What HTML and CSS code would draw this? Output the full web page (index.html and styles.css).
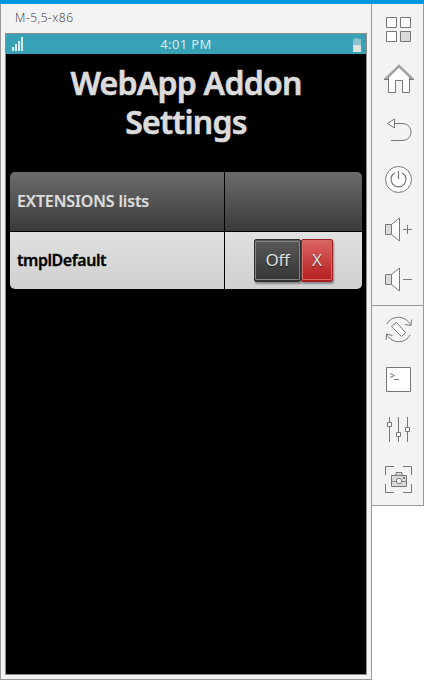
FILE: index.html
```html
<!DOCTYPE html>
<html lang="en">
<head>
<meta charset="utf-8">
<title>M-5,5-x86</title>
<link rel="stylesheet" href="styles.css">
</head>
<body>
<div class="topline"></div>
<div class="window">
  <main class="phone">
    <div class="caption"><span class="device">M-5,5-x86</span></div>
    <div class="screen">
      <div class="status">
        <svg class="signal" width="12" height="14"><path d="M1 10h2v4h-2zM4 7h2v7h-2zM7 4h2v10h-2zM10 0h2v14h-2z" fill="#dcebed"/></svg>
        <span class="clock">4:01 PM</span>
        <svg class="battery" width="8" height="14"><path d="M0 1h2V0h3v1h3v6H0z" fill="#8ac3ce"/><path d="M0 7h8v7H0z" fill="#e1e1e1"/></svg>
      </div>
      <h1>WebApp Addon Settings</h1>
      <div class="table">
        <div class="cell head"><span class="headtext">EXTENSIONS lists</span></div>
        <div class="cell head"></div>
        <div class="cell row"><span class="rowtext">tmplDefault</span></div>
        <div class="cell row actions">
          <button class="btn off"><span>Off</span></button>
          <button class="btn remove"><span>X</span></button>
        </div>
      </div>
    </div>
  </main>
  <aside class="tools">
    <div class="group first">
      <svg viewBox="372 5 51 50"><g fill="#fff"><path d="M386.500 17.500h10v10h-10zM400.500 17.500h10v10h-10zM386.500 31.500h10v10h-10z"/><path d="M400.500 31.500h10v10h-10z" fill="#dadada"/></g></svg>
      <svg viewBox="372 55 51 50"><path d="M388.500 77v15.500h7v-12h7v12h7V77L399 67z" fill="#fff"/><path d="M385 79.500 399 66l14 13.500" stroke="#a2a2a2" stroke-width="2.500"/><path d="M384 79.500h4.500M409.500 79.500h4.500"/></svg>
      <svg viewBox="372 105 51 50"><path d="M394.500 123.500h7.500c12 0 12 17 0 17h-11"/><path d="M394.500 119v9l-7-4.500z" fill="#fff"/></svg>
      <svg viewBox="372 155 51 50"><circle cx="398.500" cy="179.500" r="13" fill="#fff"/><path d="M398.500 171v8M395 172.700a7.500 7.500 0 1 0 7 0" stroke-width="1.200"/></svg>
      <svg viewBox="372 205 51 50"><path d="M391.500 224.500l8-6.500v23l-8-6.500z" fill="#fff"/><path d="M385.500 224.500h6v10h-6z" fill="#dadada"/><path d="M403 229.500h9M407.500 225v9"/></svg>
      <svg viewBox="372 255 51 50"><path d="M391.500 274.500l8-6.500v23l-8-6.500z" fill="#fff"/><path d="M385.500 274.500h6v10h-6z" fill="#dadada"/><path d="M403 279.500h9"/></svg>
    </div>
    <div class="group second">
      <svg viewBox="372 305 51 50"><path d="M387 324c4-8 17-10 23.500.5M411.500 319.500l-.5 6-6-1M410 335c-4 8-17 10-23.500-.5M386 340l.5-6 6 1.500"/><path d="M396.500 322.500l9 10-4 4-10-10z" fill="#fff"/></svg>
      <svg viewBox="372 355 51 50"><path d="M386.500 367.500h24v24h-24z" fill="#fff"/><path d="M390 373.500l4.500 2-4.500 2M394 379.500h5"/></svg>
      <svg viewBox="372 405 51 50"><path d="M389.500 417v25M398.500 417v25M407.500 417v25"/><path d="M387.500 422.500h4v4h-4zM396.500 432.500h4v4h-4zM405.500 427.500h4v4h-4z" fill="#fff"/></svg>
      <svg viewBox="372 455 51 50"><path d="M385.500 475v-8.500h8.500M403 466.500h8.500v8.500M385.500 484v8.500h8.500M403 492.500h8.500V484"/><path d="M396 475v-2.500h6v2.500" fill="#dadada"/><path d="M391.500 475.500h15v11h-15z" fill="#dadada"/><path d="M392 481.500h14" stroke="#888"/><circle cx="399" cy="481" r="2.700" fill="#fff"/><path d="M403 477h2v2h-2z" fill="#777" stroke="none"/></svg>
    </div>
  </aside>
</div>
</body>
</html>
```
FILE: styles.css
```css
* { box-sizing: border-box; }
body { margin: 0; background: #fff; height: 680px; overflow: hidden; }
.topline { height: 4px; background: #0097e0; }
.window { display: flex; align-items: flex-start; }
.phone {
  width: 372px; height: 676px; padding: 0 4px;
  background: #f3f3f3;
  border: 1px solid #999; border-top: 0;
}
.caption { height: 29px; padding-left: 10px; }
.device { font: 300 12px/27px "Open Sans", sans-serif; letter-spacing: .5px; color: #333; display: block; }
.screen {
  width: 362px; height: 642px; background: #000;
  border: 1px solid #8f8c8c;
  font-family: "Noto Sans", sans-serif;
}
.status {
  height: 20px; background: #37a1b5;
  display: flex; justify-content: space-between; align-items: center;
  padding: 0 5px;
}
.battery { margin-top: 1px; }
.clock { font-size: 13px; line-height: 20px; letter-spacing: .4px; margin-right: 4px; color: #dcebed; }
h1 {
  margin: 0; height: 118px; padding: 9px 50px 0;
  font-size: 32px; line-height: 39px; font-weight: 600; letter-spacing: -.75px;
  -webkit-text-stroke: .6px #dcdcdc;
  color: #dcdcdc; text-align: center;
}
.table {
  margin: 0 4px; height: 117px; width: 352px;
  display: grid; grid-template-columns: 214px 137px; grid-template-rows: 59px 57px; gap: 1px;
  border-radius: 5px; overflow: hidden;
}
.cell { display: flex; align-items: center; padding: 0 0 2px 7px; font-size: 16px; font-weight: 600; }
.headtext { letter-spacing: -.13px; -webkit-text-stroke: .2px #dcdcdc; }
.rowtext { letter-spacing: -.45px; -webkit-text-stroke: .3px #000; }
.head { background: linear-gradient(#6b6b6b, #3b3b3b); color: #dcdcdc; }
.row { background: linear-gradient(#e0e0e0, #d0d0d0); color: #000; }
.actions { padding: 0 0 0 29px; }
.btn {
  height: 43px; padding: 0; font: 17px/40px "Noto Sans", sans-serif; color: #e0e0e0;
  border: 1px solid; border-radius: 2px; box-shadow: 1px 2px 2px rgba(0,0,0,.35);
  text-shadow: 0 1px 1px rgba(0,0,0,.6);
}
.btn span { display: block; height: 39px; line-height: 36px; border: 1px solid; border-radius: 1px; }
.off { width: 47px; letter-spacing: -.3px; background: linear-gradient(#595959, #343434); border-color: #303030; }
.off span { border-color: #858585; }
.remove { width: 32px; background: linear-gradient(#dc6464, #b31d1d); border-color: #9c1c20; }
.remove span { border-color: #d86a6a; }
.tools { width: 52px; height: 502px; background: #f3f3f3; border-right: 1px solid #999; border-bottom: 1px solid #999; padding-top: 1px; }
.group { display: flex; flex-direction: column; height: 300px; }
.second { height: 201px; box-shadow: inset 0 1px #999; }
.tools svg { display: block; width: 51px; height: 50px; flex: none; fill: none; stroke: #777; stroke-width: 1; }
```
